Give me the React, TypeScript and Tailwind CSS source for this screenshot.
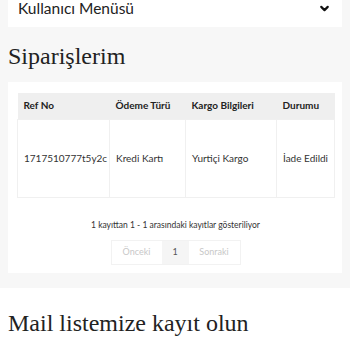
import { ChevronDown } from "lucide-react"

const sans = { fontFamily: "Lato, 'Open Sans', sans-serif" }
const serif = { fontFamily: "'Liberation Serif', 'DejaVu Serif', serif" }

const cols = [
  { label: "Ref No", value: "1717510777t5y2c", w: "w-[92px]" },
  { label: "Ödeme Türü", value: "Kredi Kartı", w: "w-[76px]" },
  { label: "Kargo Bilgileri", value: "Yurtiçi Kargo", w: "w-[91px]" },
  { label: "Durumu", value: "İade Edildi", w: "w-[58px]" },
]

export default function App() {
  return (
    <div className="w-[350px] h-[350px] overflow-hidden bg-white" style={sans}>
      <div className="bg-[#f7f7f7] px-2 pb-[15px] -mt-[8px]">
        {/* user menu */}
        <div className="bg-white h-[35px] flex items-center justify-between pl-[10px] pr-[11px] pb-[2px]">
          <span className="text-[15.5px] text-[#222] leading-none">Kullanıcı Menüsü</span>
          <ChevronDown className="w-[13px] h-[13px] text-[#111]" strokeWidth={4} />
        </div>

        <h1 className="text-[24px] text-[#222] leading-none pt-[17px] pb-[14px]" style={serif}>
          Siparişlerim
        </h1>

        <div className="bg-white pt-[11px] pb-[8px] pl-[9px] pr-[8px]">
          <table className="table-fixed w-[317px] border-collapse text-[10px] text-[#333]">
            <thead>
              <tr className="bg-[#efefef] h-[26px]">
                {cols.map((c) => (
                  <th key={c.label} className={`${c.w} text-left font-bold px-[6px] text-[#222]`}>
                    {c.label}
                  </th>
                ))}
              </tr>
            </thead>
            <tbody>
              <tr className="h-[78px]">
                {cols.map((c) => (
                  <td key={c.label} className="border border-[#f0f0f0] px-[6px] whitespace-nowrap overflow-hidden">
                    {c.value}
                  </td>
                ))}
              </tr>
            </tbody>
          </table>

          <div className="text-center text-[8.5px] leading-[12px] text-[#333] mt-[21px]">
            1 kayıttan 1 - 1 arasındaki kayıtlar gösteriliyor
          </div>
          <div className="flex justify-center mt-[9px]">
            <div className="flex border border-[#f2f2f2] h-[25px] text-[9px] text-[#c8c8c8]">
              <span className="w-[50px] flex items-center justify-center">Önceki</span>
              <span className="w-[27px] flex items-center justify-center bg-[#f5f5f5] text-[#555]">1</span>
              <span className="w-[51px] flex items-center justify-center">Sonraki</span>
            </div>
          </div>
        </div>
      </div>

      <h2 className="text-[24px] text-[#222] leading-none px-2 pt-[23px]" style={serif}>
        Mail listemize kayıt olun
      </h2>
    </div>
  )
}
